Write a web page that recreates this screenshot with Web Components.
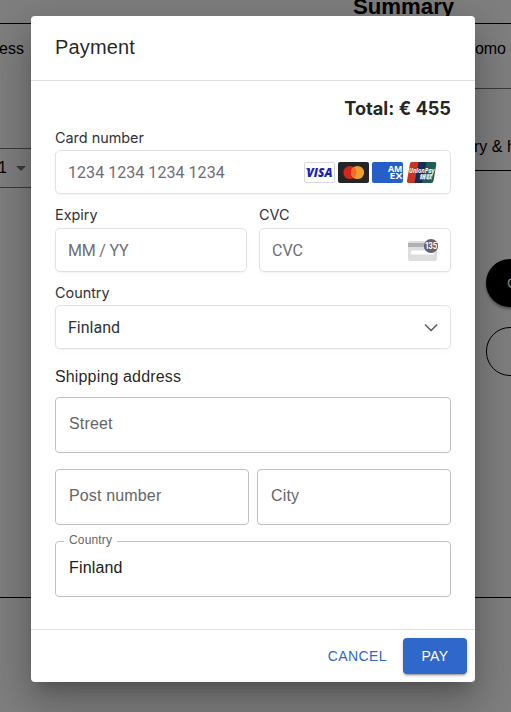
<!DOCTYPE html>
<html lang="en">
<head>
<meta charset="utf-8">
<title>Payment</title>
<style>
html, body { margin: 0; height: 100%; overflow: hidden; }
body { background: #fff; font-family: "Liberation Sans", Arial, sans-serif; color: #000; }
</style>
</head>
<body>
<checkout-page></checkout-page>
<modal-layer>
  <payment-dialog>
    <span slot="title">Payment</span>
    <total-line>Total: € 455</total-line>
    <stripe-field label="Card number" value="1234 1234 1234 1234" spacing="0.05px"><card-brands slot="end"></card-brands></stripe-field>
    <field-row style="--gap:12px">
      <stripe-field label="Expiry" value="MM / YY" spacing="-0.2px"></stripe-field>
      <stripe-field label="CVC" value="CVC"><cvc-icon slot="end"></cvc-icon></stripe-field>
    </field-row>
    <stripe-field class="country" label="Country" value="Finland" filled><chevron-icon slot="end"></chevron-icon></stripe-field>
    <section-title>Shipping address</section-title>
    <outlined-field placeholder="Street"></outlined-field>
    <field-row style="--gap:8px">
      <outlined-field placeholder="Post number"></outlined-field>
      <outlined-field placeholder="City"></outlined-field>
    </field-row>
    <outlined-field label="Country" value="Finland"></outlined-field>
    <action-button slot="actions">CANCEL</action-button>
    <action-button slot="actions" primary>PAY</action-button>
  </payment-dialog>
</modal-layer>
<script>
function define(name, css, html) {
  customElements.define(name, class extends HTMLElement {
    constructor() {
      super();
      const root = this.attachShadow({ mode: 'open' });
      root.innerHTML = '<style>*{box-sizing:border-box}' + css + '</style>' +
        (typeof html === 'function' ? html(this) : html);
    }
  });
}

define('checkout-page', `
:host{display:block;height:712px;overflow:hidden;font-size:16px;white-space:nowrap}
main{height:598px;border-bottom:1px solid #000;display:grid;grid-template-columns:475px 36px;grid-template-rows:24px 1fr}
header{grid-column:1/3;border-bottom:1px solid #000;padding-left:353px;font-weight:700;font-size:22.2px;line-height:25px;margin:0;display:flex;align-items:center;padding-bottom:10px}
.left{display:flex;flex-direction:column}
.head{height:124px;padding-top:16px;line-height:18px;text-indent:-1px}
.qty{height:40px;border:1px solid #777;border-left:0;width:60px;display:flex;align-items:center;gap:10px;line-height:18px}
.one{margin-left:-2px;width:8px}
.right{overflow:hidden;display:flex;flex-direction:column}
.promo{height:65px;border-bottom:1px solid #777;padding-top:16px;line-height:18px;letter-spacing:-.1px}
.delivery{height:82px;border-bottom:1px solid #000;padding-top:49px;line-height:18px;text-indent:-1px}
.btn{width:180px;height:48px;border-radius:24px;margin:88px 0 0 11px;background:#000;color:#fff;padding-left:21px;line-height:48px;font-size:15px;box-shadow:0 2px 3px #0006}
.line{background:none;border:1px solid #000;margin-top:20px;height:49px;box-shadow:none}
`, `<main><header>Summary</header>
<div class="left"><div class="head">ess</div><div class="qty"><span class="one">1</span><svg width="10" height="5"><path d="M0 0h10l-5 5z" fill="#777"/></svg></div></div>
<div class="right"><div class="promo">omo -</div><div class="delivery">ry &amp; h</div><div class="btn">C</div><div class="btn line"></div></div></main>`);

define('modal-layer', `
:host{position:absolute;inset:0;background:rgba(0,0,0,.5);display:flex;justify-content:center;align-items:flex-start;padding:16px 36px 0 31px;box-sizing:border-box;overflow:hidden}
`, '<slot></slot>');

define('payment-dialog', `
:host{display:flex;flex-direction:column;flex:1;height:666px;background:#fff;border-radius:4px;color:rgba(0,0,0,.87);box-shadow:0 11px 15px -7px rgba(0,0,0,.2),0 24px 38px 3px rgba(0,0,0,.14),0 9px 46px 8px rgba(0,0,0,.12)}
header{height:64px;padding:15px 24px;font-size:20px;line-height:32px;letter-spacing:.15px}
.body{flex:1;border-top:1px solid #dfdfdf;border-bottom:1px solid #dfdfdf;padding:0 24px;display:flex;flex-direction:column}
footer{height:52px;padding:8px;display:flex;justify-content:flex-end;gap:8px}
::slotted(outlined-field){margin-bottom:16px}
`, '<header><slot name="title"></slot></header><div class="body"><slot></slot></div><footer><slot name="actions"></slot></footer>');

define('total-line', `:host{display:block;height:45px;padding-top:15px;text-align:right;font:700 18.2px/25px Inter,sans-serif;box-sizing:border-box}`, '<slot></slot>');

define('field-row', `:host{display:flex;gap:var(--gap)}::slotted(*){flex:1}:host(:nth-of-type(2)){margin-bottom:16px}`, '<slot></slot>');

define('stripe-field', `
:host{display:block;color:#30313d}
:host([label="Card number"]) .label{height:24px;padding-top:2px}
.label{height:34px;padding-top:11px;font:400 14.4px/20px Inter,sans-serif}
:host(.country) .label{height:33px}
.box{height:44px;border:1px solid #e2e2e4;border-radius:5px;box-shadow:0 1px 1px rgba(0,0,0,.03),0 3px 6px rgba(0,0,0,.02);display:flex;align-items:center;justify-content:space-between;padding:0 12px;font:400 16px/20px Roboto,sans-serif;color:#6d6e78}
.box span{padding-top:2px}
:host([filled]) .box{color:#30313d}
`, el => `<div class="label">${el.getAttribute('label')}</div><div class="box"><span style="letter-spacing:${el.getAttribute('spacing') || 0}">${el.getAttribute('value')}</span><slot name="end"></slot></div>`);

define('card-brands', `:host{display:flex;gap:3px;margin-right:1px}svg{display:block;overflow:hidden}text{font-family:"Open Sans",sans-serif}`, `
<svg width="31" height="21"><rect x=".5" y=".5" width="30" height="20" rx="1.5" fill="#fff" stroke="#d9d9dc"/><text x="2.5" y="14.7" font-size="11.5" font-weight="800" font-style="italic" fill="#1a1fb8" textLength="26" lengthAdjust="spacingAndGlyphs">VISA</text><path d="M1.5 6.5h3.5l1.5 3z" fill="#1a1fb8"/></svg>
<svg width="31" height="21"><rect width="31" height="21" rx="2" fill="#252525"/><circle cx="12" cy="10.5" r="6.6" fill="#d9241d"/><circle cx="19.5" cy="10.5" r="6.6" fill="#ee9f2d"/><path d="M15.75 5.1a6.6 6.6 0 0 1 0 10.8a6.6 6.6 0 0 1 0-10.8z" fill="#ed7024"/></svg>
<svg width="31" height="21"><rect width="31" height="21" rx="2" fill="#265fc8"/><g fill="#fff" font-size="9" font-weight="700"><text x="16" y="10" textLength="14.5" lengthAdjust="spacingAndGlyphs">AM</text><text x="17.5" y="17.2" textLength="13" lengthAdjust="spacingAndGlyphs">EX</text></g></svg>
<svg width="31" height="21"><path d="M5.5 0h8l-4 21H3q-2.5 0-2-2.5L4 1.5Q4.3 0 5.5 0z" fill="#cb3424"/><path d="M12.5 0h9l-4 21H8.5z" fill="#182b55"/><path d="M20.5 0h8q2.2 0 1.8 2L27.5 19q-.4 2-2.3 2h-9z" fill="#215b55"/><g fill="#fff" font-weight="700" font-style="italic"><text x="3" y="10.5" font-size="7.5" textLength="25.5" lengthAdjust="spacingAndGlyphs">UnionPay</text><text x="13" y="16.7" font-size="6" style="font-family:'Noto Sans CJK SC',sans-serif" textLength="13" lengthAdjust="spacingAndGlyphs">银联</text></g></svg>`);

define('cvc-icon', `:host{display:block}svg{display:block}`, `
<svg width="30" height="24"><rect y="3" width="29" height="20" rx="2.5" fill="#dedee1"/><rect y="5" width="29" height="4" fill="#b0b0b5"/><rect x="3" y="12.5" width="23" height="4" rx="1" fill="#fff"/><circle cx="23" cy="8" r="7.1" fill="#62636c"/><text x="17.3" y="11.3" font-family="Inter,sans-serif" font-size="8.8" font-weight="700" fill="#fff" textLength="12" lengthAdjust="spacingAndGlyphs">135</text></svg>`);

define('chevron-icon', `:host{display:block;padding-top:2px}svg{display:block}`, `<svg width="14" height="8"><path d="M1.5 1l5.6 5.5L12.7 1" fill="none" stroke="#62636d" stroke-width="1.7" stroke-linecap="round" stroke-linejoin="round"/></svg>`);

define('section-title', `:host{display:block;height:48px;padding-top:17px;font-size:16px;line-height:22px;letter-spacing:.15px;box-sizing:border-box}`, '<slot></slot>');

define('outlined-field', `
:host{display:block}
fieldset{margin:0;min-width:0;height:56px;border:1px solid #c1c1c1;border-radius:4px;padding:0 13px;font-size:16px;line-height:23px;letter-spacing:.15px}
.ph{color:#666;padding-top:14px}
fieldset.labelled{height:64px;margin-top:-8px;padding-left:8px}
legend{font-size:12px;line-height:14px;height:16px;padding:0 5px;color:#666;margin:0}
.value{padding:7px 0 0 5px;color:#202020}
`, el => el.getAttribute('label')
  ? `<fieldset class="labelled"><legend>${el.getAttribute('label')}</legend><div class="value">${el.getAttribute('value')}</div></fieldset>`
  : `<fieldset><div class="ph">${el.getAttribute('placeholder')}</div></fieldset>`);

define('action-button', `
:host{display:flex;align-items:center;justify-content:center;height:36px;min-width:64px;padding:0 8px;border-radius:4px;box-sizing:border-box;color:#2f67ca;font-size:14px;letter-spacing:.4px;font-weight:400}
:host([primary]){background:#2f67ca;color:#fff;padding:0;box-shadow:0 3px 1px -2px rgba(0,0,0,.2),0 2px 2px rgba(0,0,0,.14),0 1px 5px rgba(0,0,0,.12)}
`, '<slot></slot>');
</script>
</body>
</html>
